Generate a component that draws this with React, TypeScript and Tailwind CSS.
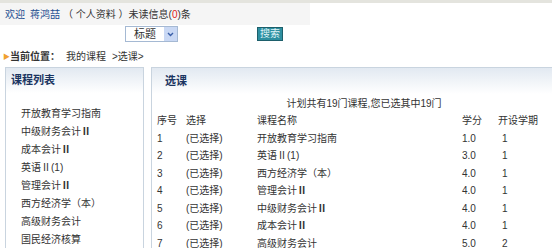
import { Fragment } from "react";

const courses = [
  "开放教育学习指南",
  "中级财务会计Ⅱ",
  "成本会计Ⅱ",
  "英语Ⅱ(1)",
  "管理会计Ⅱ",
  "西方经济学（本）",
  "高级财务会计",
  "国民经济核算",
];

const rows = [
  ["1", "开放教育学习指南", "1.0", "1"],
  ["2", "英语Ⅱ(1)", "3.0", "1"],
  ["3", "西方经济学（本）", "4.0", "1"],
  ["4", "管理会计Ⅱ", "4.0", "1"],
  ["5", "中级财务会计Ⅱ", "4.0", "1"],
  ["6", "成本会计Ⅱ", "4.0", "1"],
  ["7", "高级财务会计", "5.0", "2"],
];

// bold roman numeral like the old page font renders it
function Name({ text }: { text: string }) {
  if (text.endsWith("Ⅱ")) {
    return (
      <span>
        {text.slice(0, -1)}
        <span className="font-bold">Ⅱ</span>
      </span>
    );
  }
  return <span>{text}</span>;
}

export default function App() {
  return (
    <div
      className="w-[552px] h-[248px] overflow-hidden bg-white text-[10px] text-[#333]"
      style={{ fontFamily: '"Liberation Sans", "Noto Sans CJK SC", sans-serif' }}
    >
      {/* top strip */}
      <div className="h-[3px] bg-[#e4e4de]" />

      {/* welcome */}
      <div className="h-[22px] w-[310px] bg-[#f5f5f5] flex items-center pl-[5px] whitespace-nowrap">
        <span className="text-[#1d4f91]">欢迎</span>
        <span className="ml-[5px] text-[#1d4f91]">蒋鸿喆</span>
        <span className="ml-[3px]">（ 个人资料 ）未读信息(</span>
        <span className="text-[#e02020]">0</span>
        <span>)条</span>
      </div>

      {/* search */}
      <div className="h-[18px] flex items-center pl-[125px]">
        <div className="w-[53px] h-[16px] border border-[#a5b9d3] bg-white flex items-center">
          <span className="flex-1 pl-[8px] leading-none text-[11px]">标题</span>
          <div className="w-[13px] h-full bg-[#c9d8f4] flex items-center justify-center">
            <svg width="7" height="5" viewBox="0 0 7 5">
              <path d="M1 1 L3.5 3.5 L6 1" stroke="#3a5fa8" strokeWidth="1.4" fill="none" />
            </svg>
          </div>
        </div>
        <div className="w-[79px]" />
        <button className="w-[26px] h-[14px] bg-[#2e8fa0] border border-[#1d5f6b] text-[#dff3f6] text-[10px] leading-none flex items-center justify-center">
          搜索
        </button>
      </div>

      {/* breadcrumb */}
      <div className="mt-[5px] h-[17px] flex items-center pl-[3px] whitespace-nowrap">
        <span className="text-[#f0a030] text-[7px] leading-none">▶</span>
        <span className="font-bold">当前位置：</span>
        <span className="ml-[6px]">我的课程</span>
        <span className="ml-[6px]">&gt;选课&gt;</span>
      </div>

      {/* panels */}
      <div className="mt-[2px] flex pl-[5px] gap-[7px]">
        <div className="w-[139px] h-[190px] border border-[#c9d4df] shrink-0">
          <div className="h-[25px] bg-gradient-to-b from-[#e2e9f1] to-white flex items-center pl-[5px] font-bold text-[11px] text-[#1b3561]">
            课程列表
          </div>
          <div className="pt-[11px] pl-[15px] flex flex-col">
            {courses.map((c) => (
              <div key={c} className="h-[18px] flex items-center whitespace-nowrap">
                <Name text={c} />
              </div>
            ))}
          </div>
        </div>

        <div className="w-[426px] h-[190px] border border-[#c9d4df] shrink-0">
          <div className="h-[26px] bg-gradient-to-b from-[#e2e9f1] to-white flex items-center pl-[13px] font-bold text-[11px] text-[#1b3561]">
            选课
          </div>
          <div className="h-[18px] flex items-center justify-center">
            计划共有19门课程,您已选其中19门
          </div>
          <div className="grid grid-cols-[29px_71px_205px_36px_1fr] pl-[5px] auto-rows-[17.5px] items-center whitespace-nowrap">
            <span>序号</span>
            <span>选择</span>
            <span>课程名称</span>
            <span>学分</span>
            <span>开设学期</span>
            {rows.map((r) => (
              <Fragment key={r[0]}>
                <span>{r[0]}</span>
                <span>(已选择)</span>
                <Name text={r[1]} />
                <span>{r[2]}</span>
                <span className="pl-[4px]">{r[3]}</span>
              </Fragment>
            ))}
          </div>
        </div>
      </div>
    </div>
  );
}
